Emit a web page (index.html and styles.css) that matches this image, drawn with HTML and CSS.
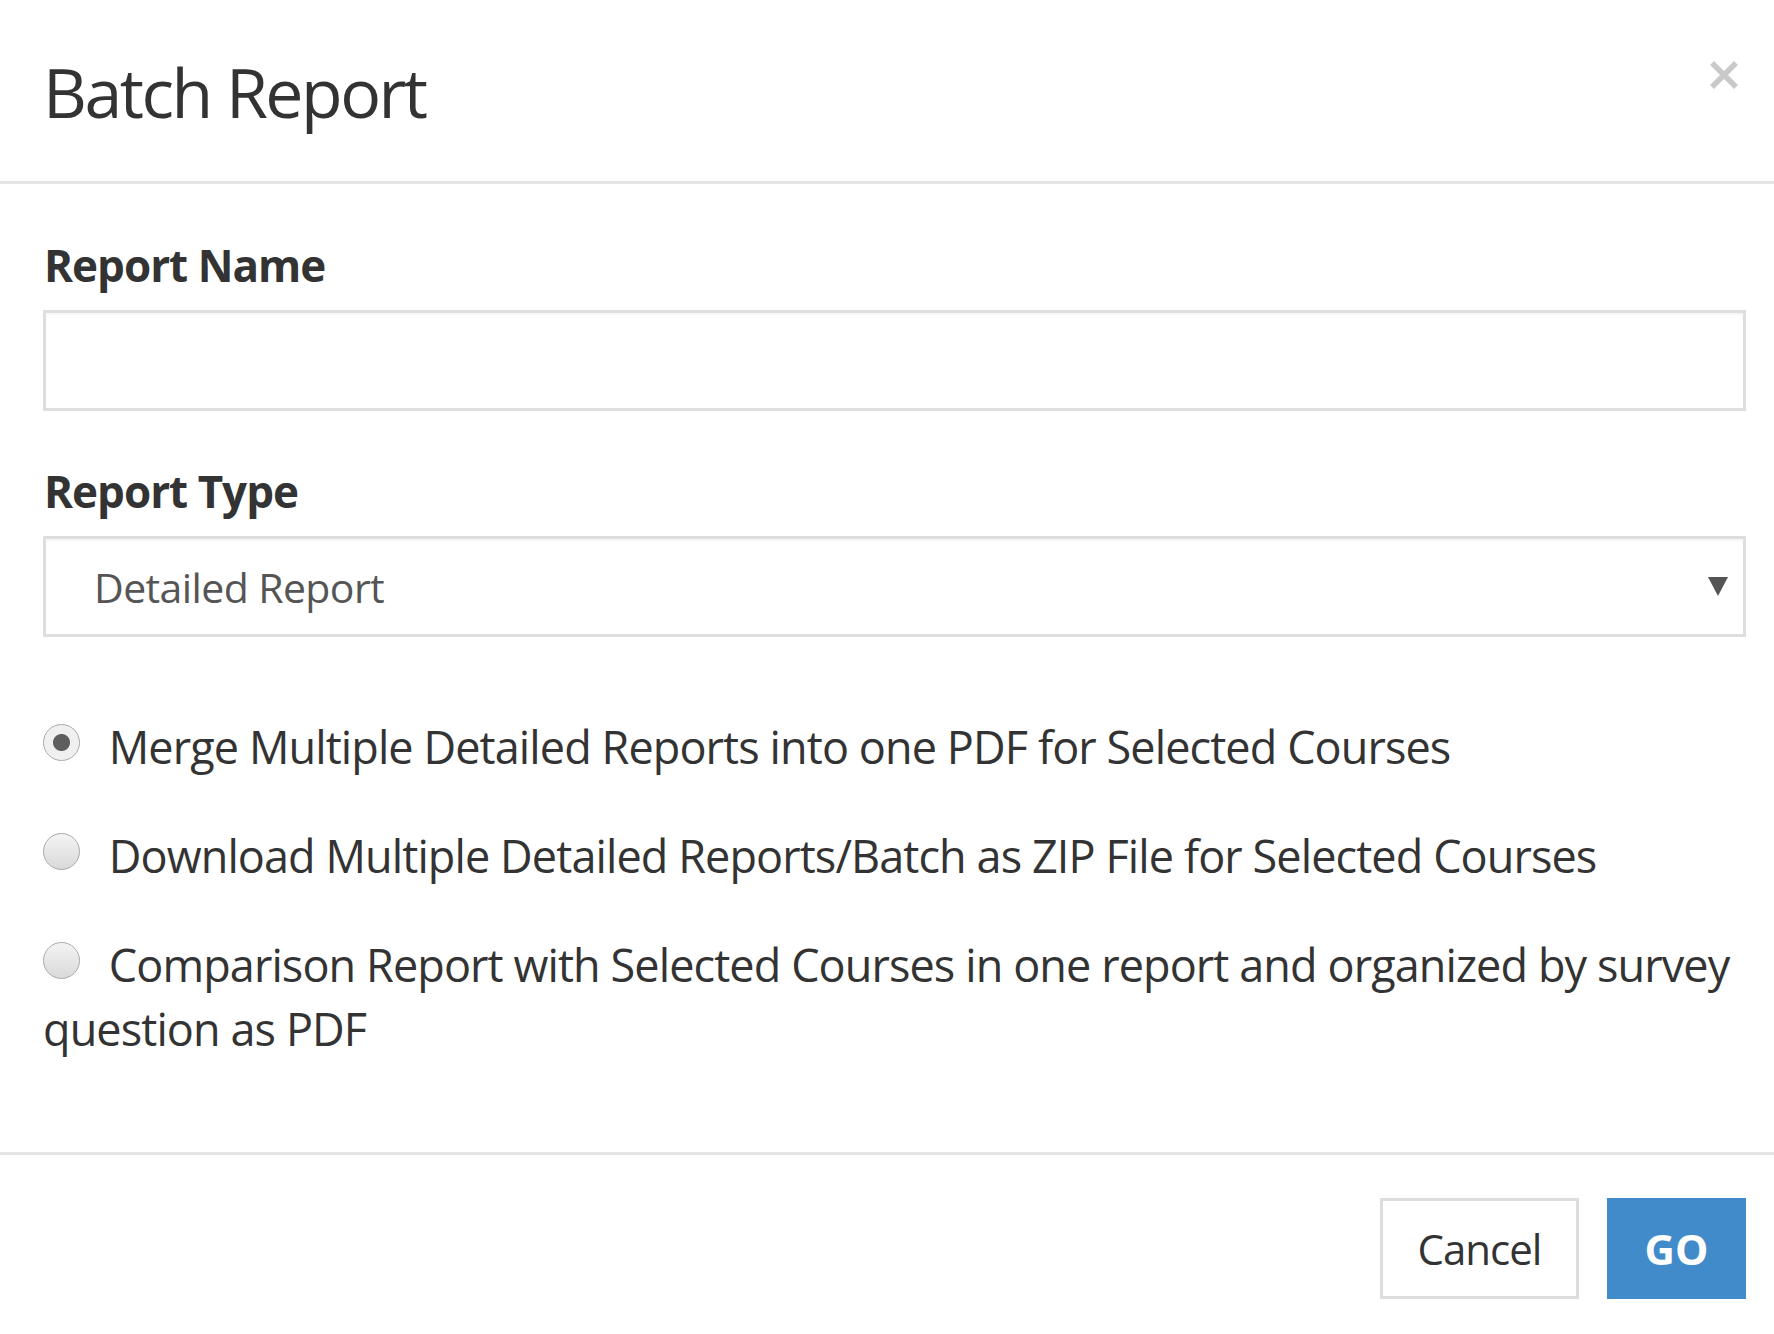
FILE: index.html
```html
<!DOCTYPE html>
<html lang="en">
<head>
  <meta charset="UTF-8" />
  <meta name="viewport" content="width=device-width, initial-scale=1.0"/>
  <title>Batch Report</title>
  <link rel="stylesheet" href="styles.css">
</head>
<body>
  <div class="modal">
    <div class="modal-header">
      <h3 class="modal-title">Batch Report</h3>
      <button class="close" aria-label="Close">
        <svg width="30" height="30" viewBox="0 0 30 30">
          <path d="M3 3 L27 27 M27 3 L3 27" stroke="#c9c9c9" stroke-width="5.5" fill="none"/>
        </svg>
      </button>
    </div>

    <div class="modal-body">
      <label class="field-label" for="reportName">Report Name</label>
      <input type="text" id="reportName" class="form-control">

      <label class="field-label" for="reportType">Report Type</label>
      <div class="select-wrap">
        <select id="reportType" class="form-control">
          <option>Detailed Report</option>
          <option>Summary Report</option>
        </select>
      </div>

      <div class="options">
        <label class="option">
          <input type="radio" name="batchMode" checked>
          Merge Multiple Detailed Reports into one PDF for Selected Courses
        </label>
        <label class="option">
          <input type="radio" name="batchMode">
          Download Multiple Detailed Reports/Batch as ZIP File for Selected Courses
        </label>
        <label class="option">
          <input type="radio" name="batchMode">
          Comparison Report with Selected Courses in one report and organized by survey question as PDF
        </label>
      </div>
    </div>

    <div class="modal-footer">
      <button class="btn btn-default">Cancel</button>
      <button class="btn btn-primary">GO</button>
    </div>
  </div>
</body>
</html>
```

FILE: styles.css
```css
body {
  margin: 0;
  background: #fff;
  color: #333;
  font-family: "Open Sans", "Noto Sans", Arial, sans-serif;
}

.modal {
  width: 1774px;
  height: 1334px;
  box-sizing: border-box;
}

.modal-header {
  display: flex;
  justify-content: space-between;
  align-items: flex-start;
  height: 184px;
  box-sizing: border-box;
  padding: 51px 35px 0 43px;
  border-bottom: 3px solid #e5e5e5;
}

.modal-title {
  margin: 0;
  font-size: 68px;
  font-weight: 400;
  letter-spacing: -2.5px;
  line-height: 81px;
  color: #333;
}

.close {
  background: none;
  border: none;
  padding: 0;
  margin-top: 9px;
  cursor: pointer;
}

.close svg {
  display: block;
}

.modal-body {
  padding: 48px 28px 91px 43px;
}

.field-label {
  display: block;
  font-size: 44px;
  font-weight: 700;
  letter-spacing: -1px;
  line-height: 66px;
  margin: 0 0 12px 1px;
  color: #333;
}

.form-control {
  display: block;
  width: 100%;
  height: 101px;
  box-sizing: border-box;
  border: 3px solid #dedede;
  box-shadow: inset 0 2px 2px rgba(0, 0, 0, 0.04);
  background: #fff;
  font-family: inherit;
  border-radius: 0;
  margin: 0 0 47px 0;
}

.select-wrap {
  position: relative;
}

select.form-control {
  -webkit-appearance: none;
  appearance: none;
  padding: 0 60px 0 48px;
  font-size: 41px;
  letter-spacing: -0.6px;
  color: #555;
  margin-bottom: 0;
}

.select-wrap::after {
  content: "";
  position: absolute;
  right: 18px;
  top: 41px;
  border-left: 10px solid transparent;
  border-right: 10px solid transparent;
  border-top: 19px solid #555;
  pointer-events: none;
}

.options {
  margin-top: 78px;
}

.option {
  display: block;
  font-size: 45px;
  letter-spacing: -0.9px;
  line-height: 64px;
  color: #333;
  margin-bottom: 45px;
}

.option:last-child {
  margin-bottom: 0;
}

.option input {
  -webkit-appearance: none;
  appearance: none;
  width: 37px;
  height: 37px;
  margin: 0 18px 0 0;
  vertical-align: 3px;
  border-radius: 50%;
  border: 1px solid #aaa;
  background: linear-gradient(#f4f4f4, #d9d9d9);
  box-sizing: border-box;
}

.option input:checked {
  background: radial-gradient(circle, #5e5e5e 0 8px, #f0f0f0 9px);
}

.modal-footer {
  display: flex;
  justify-content: flex-end;
  gap: 28px;
  padding: 43px 28px 0 0;
  border-top: 3px solid #e5e5e5;
}

.btn {
  height: 101px;
  font-family: inherit;
  font-size: 42px;
  border-radius: 0;
  cursor: pointer;
}

.btn-default {
  width: 199px;
  background: #fff;
  border: 3px solid #ddd;
  color: #333;
  letter-spacing: -1px;
}

.btn-primary {
  width: 139px;
  background: #428bca;
  border: none;
  color: #fff;
  font-weight: 700;
}
```
